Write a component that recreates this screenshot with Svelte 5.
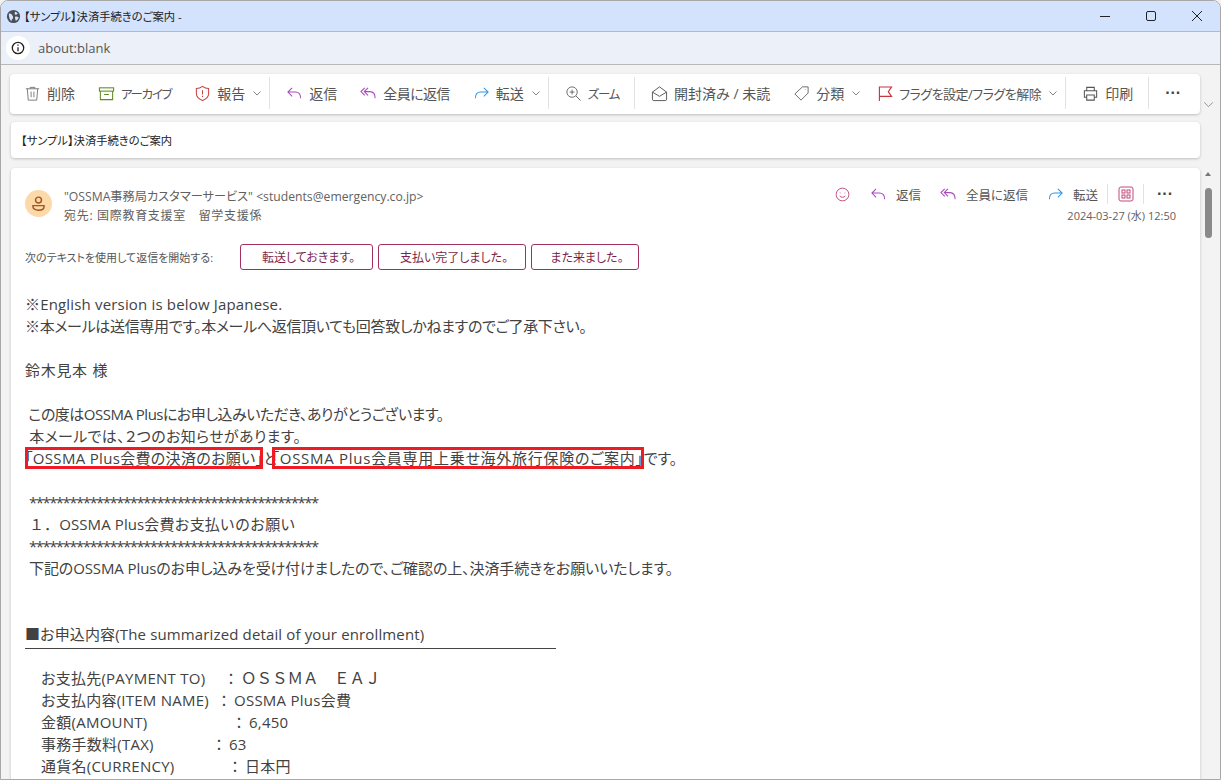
<script lang="ts">
	// ls = per-line tracking: the reference's hinted font has uneven advance widths
	const lines = [
		{ text: '※English version is below Japanese.', ls: 0.17 },
		{ text: '※本メールは送信専用です。本メールへ返信頂いても回答致しかねますのでご了承下さい。', ls: -0.32 },
		{ text: '', ls: 0 },
		{ text: '鈴木見本 様', ls: 0.7 },
		{ text: '', ls: 0 },
		{ text: ' この度はOSSMA Plusにお申し込みいただき、ありがとうございます。', ls: -0.5 },
		{ text: ' 本メールでは、２つのお知らせがあります。', ls: 0.35 }
	];
	const details = [
		{ label: 'お支払先(PAYMENT TO)', valueX: 241, value: 'ＯＳＳＭＡ　ＥＡＪ', full: true },
		{ label: 'お支払内容(ITEM NAME)', valueX: 234, value: 'OSSMA Plus会費' },
		{ label: '金額(AMOUNT)', valueX: 249, value: '6,450' },
		{ label: '事務手数料(TAX)', valueX: 229, value: '63' },
		{ label: '通貨名(CURRENCY)', valueX: 245, value: '日本円' }
	];
</script>

{#snippet reply(color)}
	<svg class="ico" viewBox="0 0 18 18" fill="none" stroke={color} stroke-width="1.1"><path d="M6.5 3 2 7.5 6.5 12M2 7.5h8c3.5 0 5.5 2.2 5.5 6.5"/></svg>
{/snippet}
{#snippet replyAll(color)}
	<svg class="ico" viewBox="0 0 18 18" fill="none" stroke={color} stroke-width="1.1"><path d="M5 3 1 7l4 4M8.5 3l-4 4 4 4M4.500 7h6c3.500 0 5.500 2.400 5.500 7"/></svg>
{/snippet}
{#snippet forward()}
	<svg class="ico" viewBox="0 0 18 18" fill="none" stroke="#2f96e8" stroke-width="1.1"><path d="M11.500 3 16 7.500 11.500 12M16 7.500H8c-3.500 0-5.500 2.200-5.500 6.500"/></svg>
{/snippet}
{#snippet chevron()}
	<svg class="chev" viewBox="0 0 10 10" fill="none" stroke="#777" stroke-width="0.9"><path d="m1.500 3.500 3.500 3.500 3.500-3.500"/></svg>
{/snippet}

<div class="window">
	<header class="titlebar">
		<svg class="globe" viewBox="0 0 16 16"><circle cx="8" cy="8" r="7" fill="#4a4f57"/><path d="M3 5c2-.5 3 .5 3.500 1.500S8 8 7.500 9.500 6 11 5.500 13C4 11 3 9 3 5Zm7-2c1 .5 2 1 2.500 2-1 1-1.500.5-2.500 1S9 4 10 3Zm0 5c1.500 0 3 .5 3.500 1-.5 1.500-1.500 3-3 3.500-.5-1.500-1.500-3-.5-4.500Z" fill="#d3e3fd"/></svg>
		<span class="title">【サンプル】決済手続きのご案内 -</span>
		<div class="winbtns">
			<svg viewBox="0 0 12 12" stroke="#222" fill="none"><path d="M1 6.500h10"/></svg>
			<svg viewBox="0 0 12 12" stroke="#222" fill="none"><rect x="1.500" y="1.500" width="9" height="9" rx="1.500"/></svg>
			<svg viewBox="0 0 12 12" stroke="#222" fill="none"><path d="m1 1 10 10M11 1 1 11"/></svg>
		</div>
	</header>
	<div class="addressbar">
		<span class="infobtn">
			<svg viewBox="0 0 14 14" fill="none" stroke="#222" stroke-width="1.300"><circle cx="7" cy="7" r="5.700"/><path d="M7 6.200v4M7 3.500v1.300"/></svg>
		</span>
		<span class="url">about:blank</span>
	</div>

	<div class="content">
		<div class="main">
			<nav class="card toolbar">
				<button class="tool first"><svg class="ico" viewBox="0 0 18 18" fill="none" stroke="#777" stroke-width="1"><path d="M2 4h14M6.500 4V2.500h5V4M3.500 4l1 12h9l1-12M7.500 7v6M10.500 7v6"/></svg>削除</button>
				<button class="tool"><svg class="ico" viewBox="0 0 18 18" fill="none" stroke="#5c8a1e" stroke-width="1.100"><rect x="1.500" y="3" width="15" height="3.500"/><path d="M2.500 6.500V15.500h13V6.500M6.500 10h5"/></svg><span class="kana">アーカイブ</span></button>
				<button class="tool tight"><svg class="ico" viewBox="0 0 18 18" fill="none" stroke="#c8423f" stroke-width="1.100"><path d="M9 1.500c2 1.500 4 2.200 6.500 2.200V9c0 3.500-3 6-6.500 7.500C5.500 15 2.500 12.500 2.500 9V3.700C5 3.700 7 3 9 1.500ZM9 5.500v4.500M9 11.500v1.300"/></svg>報告{@render chevron()}</button>
				<i class="sep"></i>
				<button class="tool">{@render reply('#a94bbf')}返信</button>
				<button class="tool">{@render replyAll('#a94bbf')}<span class="slim">全員に返信</span></button>
				<button class="tool tight">{@render forward()}転送{@render chevron()}</button>
				<i class="sep"></i>
				<button class="tool"><svg class="ico" viewBox="0 0 18 18" fill="none" stroke="#666" stroke-width="1"><circle cx="7.500" cy="7.500" r="5.500"/><path d="m11.500 11.500 5 5M5 7.500h5M7.500 5v5"/></svg><span class="kana">ズーム</span></button>
				<i class="sep"></i>
				<button class="tool"><svg class="ico" viewBox="0 0 18 18" fill="none" stroke="#555" stroke-width="1"><path d="M1.500 7.500 9 2l7.500 5.500V15a1.500 1.500 0 0 1-1.500 1.500H3A1.500 1.500 0 0 1 1.500 15ZM1.500 7.500 9 12l7.500-4.500"/></svg>開封済み / 未読</button>
				<button class="tool tight"><svg class="ico" viewBox="0 0 18 18" fill="none" stroke="#666" stroke-width="1"><path d="M10 2h6v6.500l-7.500 7.500L2 9.500ZM13 4.500v.5"/></svg>分類{@render chevron()}</button>
				<button class="tool tight"><svg class="ico flag" viewBox="0 0 16 18" fill="none" stroke="#c8353f" stroke-width="1.200"><path d="M1.500 17V2h13l-3.500 5 3.500 5h-13"/></svg><span class="flagtext">フラグを設定/フラグを解除</span>{@render chevron()}</button>
				<i class="sep"></i>
				<button class="tool"><svg class="ico" viewBox="0 0 18 18" fill="none" stroke="#555" stroke-width="1.100"><path d="M5 6V2.500h8V6M5 13H2.500V6h13v7H13M5 10.500h8v5.500H5Z"/></svg>印刷</button>
				<i class="sep"></i>
				<span class="more">···</span>
			</nav>

			<div class="card subject">【サンプル】決済手続きのご案内</div>

			<article class="card message">
				<div class="msghead">
					<div class="avatar">
						<svg viewBox="0 0 16 16" fill="none" stroke="#a5561c" stroke-width="1.400"><circle cx="8" cy="4.800" r="2.800"/><path d="M2.800 10h10.400v1c0 2-2 3.300-5.200 3.300S2.800 13 2.800 11Z"/></svg>
					</div>
					<div class="who">
						<div>"OSSMA事務局カスタマーサービス" &lt;students@emergency.co.jp&gt;</div>
						<div class="rcpt">宛先: 国際教育支援室　留学支援係</div>
					</div>
					<div class="meta">
						<div class="actions">
							<svg class="smile" viewBox="0 0 16 16" fill="none" stroke="#c0497f"><circle cx="8" cy="8" r="6.800"/><path d="M5 9.500c1.500 2 4.500 2 6 0M5.500 6v.8M10.500 6v.8"/></svg>
							<span class="act">{@render reply('#a94bbf')}返信</span>
							<span class="act">{@render replyAll('#a94bbf')}全員に返信</span>
							<span class="act">{@render forward()}転送</span>
							<i class="sep small"></i>
							<svg class="apps" viewBox="0 0 16 16" fill="none" stroke="#c0497f"><rect x="1" y="1" width="14" height="14" rx="2"/><rect x="4" y="4" width="3" height="3"/><rect x="9" y="4" width="3" height="3"/><rect x="4" y="9" width="3" height="3"/><rect x="9" y="9" width="3" height="3"/></svg>
							<i class="sep small"></i>
							<span class="more small">···</span>
						</div>
						<div class="date">2024-03-27 (水) 12:50</div>
					</div>
				</div>

				<div class="quick">
					<span class="quicklabel">次のテキストを使用して返信を開始する:</span>
					<button class="qbtn a">転送しておきます。</button>
					<button class="qbtn b">支払い完了しました。</button>
					<button class="qbtn c">また来ました。</button>
				</div>

				<div class="body">
					{#each lines as line}
						<div class="line" style="letter-spacing:{line.ls}px">{line.text}</div>
					{/each}
					<div class="line marked"><span class="mark one">「OSSMA Plus会費の決済のお願い」</span><span class="to">と</span><span class="mark two">「OSSMA Plus会員専用上乗せ海外旅行保険のご案内」</span>です。</div>
					<div class="line"></div>
					<div class="line indent stars">*******************************************</div>
					<div class="line indent numbered">１．OSSMA Plus会費お支払いのお願い</div>
					<div class="line indent stars">*******************************************</div>
					<div class="line indent notice">下記のOSSMA Plusのお申し込みを受け付けましたので、ご確認の上、決済手続きをお願いいたします。</div>
					<div class="line"></div>
					<div class="line"></div>
					<div class="line heading">■お申込内容(The summarized detail of your enrollment)</div>
					<div class="line"></div>
					{#each details as row}
						<div class="line row">
							<span class="label" style="width:{row.valueX - 61}px">{row.label}</span><span class="colon">：</span><span class:full={row.full}>{row.value}</span>
						</div>
					{/each}
				</div>
			</article>
		</div>

		<aside class="side">
			<svg class="collapse" viewBox="0 0 10 10" fill="none" stroke="#888" stroke-width="0.800"><path d="m1 3 4 4 4-4"/></svg>
			<div class="scrolltrack">
				<span class="arrow"></span>
				<span class="thumb"></span>
			</div>
		</aside>
	</div>
</div>

<style>
	:global(body) {
		margin: 0;
		overflow: hidden;
		background: #f3f3f3;
	}
	.window {
		height: 780px;
		width: 1221px;
		box-sizing: border-box;
		display: flex;
		flex-direction: column;
		overflow: hidden;
		background: #f3f3f3;
		border: 1px solid #a8a8a8;
		border-radius: 8px 8px 0 0;
		font-family: "Open Sans", "Noto Sans CJK JP", sans-serif;
		font-feature-settings: "palt";
		color: #424242;
	}
	.titlebar {
		height: 30px;
		flex: none;
		display: flex;
		align-items: center;
		background: #d3e3fd;
		border-bottom: 1px solid #b3b8c2;
		padding-left: 5px;
	}
	.globe { width: 15px; height: 15px; margin-right: 3px; }
	.title { font-size: 11.300px; color: #222; }
	.winbtns {
		margin-left: auto;
		display: flex;
		gap: 34px;
		padding-right: 17px;
	}
	.winbtns svg { width: 12px; height: 12px; }
	.addressbar {
		height: 32px;
		flex: none;
		display: flex;
		align-items: center;
		background: #ecf0f8;
		border-bottom: 1px solid #b8b8b8;
		padding-left: 5px;
		font-size: 13px;
	}
	.infobtn {
		width: 24px;
		height: 24px;
		border-radius: 50%;
		background: #fff;
		display: flex;
		align-items: center;
		justify-content: center;
		margin-right: 8px;
	}
	.infobtn svg { width: 14px; height: 14px; }
	.url { color: #555; }
	.content {
		flex: 1;
		min-height: 0;
		display: flex;
	}
	.main {
		width: 1199px;
		flex: none;
		padding: 9px 0 0 9px;
		box-sizing: border-box;
		display: flex;
		flex-direction: column;
		gap: 8px;
	}
	.card {
		background: #fff;
		border-radius: 4px;
		box-shadow: 0 1px 3px rgba(0, 0, 0, 0.22);
	}
	.toolbar {
		height: 40px;
		flex: none;
		box-sizing: border-box;
		display: flex;
		align-items: center;
		padding: 0 0 2px 14px;
		font-size: 14px;
	}
	.tool {
		display: flex;
		align-items: center;
		gap: 6px;
		border: 0;
		background: none;
		padding: 0;
		margin-right: 23px;
		font: inherit;
		font-feature-settings: "palt";
		color: #555;
		white-space: nowrap;
	}
	.tool.tight { margin-right: 17px; }
	.kana { font-size: 12.500px; letter-spacing: -1.300px; }
	.slim { letter-spacing: -0.600px; }
	.flagtext { font-size: 13px; letter-spacing: -0.500px; }
	.ico { width: 17px; height: 17px; flex: none; }
	.flag { width: 15px; }
	.chev { width: 10px; height: 10px; margin-left: 1px; }
	.sep {
		width: 1px;
		height: 32px;
		background: #e2e2e2;
		margin-right: 16px;
		flex: none;
	}
	.tool + .sep { margin-left: -8px; }
	.tool.tight + .sep { margin-left: -10px; }
	.more {
		font-family: "Liberation Sans", sans-serif;
		font-size: 16px;
		font-weight: 700;
		line-height: 1;
		color: #444;
		letter-spacing: 0;
	}
	.subject {
		height: 36px;
		flex: none;
		box-sizing: border-box;
		display: flex;
		align-items: center;
		padding-left: 10px;
		margin-left: 1px;
		font-size: 11.300px;
		color: #222;
	}
	.message {
		flex: 1;
		min-height: 0;
		margin: 2px 0 0 1px;
		padding: 0 0 0 14px;
		overflow: hidden;
		border-radius: 4px 4px 0 0;
	}
	.msghead {
		display: flex;
		height: 66px;
		box-sizing: border-box;
		padding-top: 17px;
	}
	.avatar {
		width: 27px;
		height: 27px;
		margin-top: 5px;
		flex: none;
		border-radius: 50%;
		background: #fcd9a8;
		display: flex;
		align-items: center;
		justify-content: center;
	}
	.avatar svg { width: 17px; height: 17px; }
	.who {
		margin-left: 12px;
		padding-top: 2px;
		font-size: 12.200px;
		line-height: 19px;
		color: #616161;
	}
	.rcpt { letter-spacing: 0.700px; font-size: 12px; }
	.meta {
		margin-left: auto;
		padding-right: 24px;
		display: flex;
		flex-direction: column;
		align-items: flex-end;
	}
	.actions {
		height: 18px;
		display: flex;
		align-items: center;
		gap: 0;
		font-size: 12.500px;
		color: #555;
	}
	.smile { width: 15px; height: 15px; margin-right: 20px; }
	.act {
		display: flex;
		align-items: center;
		gap: 9px;
		margin-right: 19px;
	}
	.actions .ico { width: 17px; height: 17px; }
	.act:nth-of-type(3) { margin-right: 9px; }
	.sep.small { height: 20px; margin: 0 10px 0 0; }
	.apps { width: 16px; height: 16px; margin-right: 9px; }
	.more.small { margin: 0 3px 0 3px; font-size: 16px; }
	.date {
		font-size: 11px;
		color: #616161;
		margin-top: 4px;
	}
	.quick {
		display: flex;
		align-items: center;
		height: 26px;
		margin-top: 10px;
		gap: 5px;
	}
	.quicklabel {
		font-size: 11px;
		color: #555;
		width: 210px;
		flex: none;
		white-space: nowrap;
	}
	.qbtn {
		height: 26px;
		box-sizing: border-box;
		background: #fff;
		border: 1px solid #a4305f;
		border-radius: 3px;
		color: #7d1f4a;
		font: inherit;
		font-feature-settings: "palt";
		font-size: 12px;
		padding: 0 0 0 4px;
	}
	.qbtn.a { width: 133px; }
	.qbtn.b { width: 148px; }
	.qbtn.c { width: 108px; }
	.body {
		margin-top: 23px;
		font-size: 15px;
		line-height: 22px;
		color: #424242;
	}
	.line {
		height: 22px;
		white-space: pre;
	}
	.indent { padding-left: 4px; }
	.stars { letter-spacing: -1.550px; }
	.numbered { font-feature-settings: normal; letter-spacing: 0.100px; }
	.notice { letter-spacing: -0.100px; }
	.marked {
		display: flex;
		align-items: center;
	}
	.mark {
		outline: 3px solid #ed1c24;
		outline-offset: -3px;
		height: 22px;
		box-sizing: border-box;
		line-height: 22px;
	}
	.mark.one { letter-spacing: 0.320px; }
	.mark.two { letter-spacing: 0.720px; }
	.to { letter-spacing: -5px; }
	.heading {
		width: 531px;
		height: 25px;
		border-bottom: 1px solid #444;
		letter-spacing: 0.140px;
	}
	.heading + .line { height: 18px; }
	.row {
		display: flex;
		padding-left: 16px;
		letter-spacing: 0.250px;
	}
	.label { flex: none; }
	.colon {
		width: 20px;
		flex: none;
		text-align: center;
		font-feature-settings: normal;
		letter-spacing: 0;
	}
	.full {
		font-size: 15.500px;
		font-feature-settings: normal;
		letter-spacing: 0;
	}
	.side {
		flex: 1;
		position: relative;
	}
	.collapse {
		position: absolute;
		left: 3px;
		top: 34px;
		width: 11px;
		height: 11px;
	}
	.scrolltrack {
		position: absolute;
		left: 0;
		right: 0;
		top: 104px;
		bottom: 0;
	}
	.arrow {
		position: absolute;
		left: 5px;
		top: 3px;
		border-left: 3px solid transparent;
		border-right: 3px solid transparent;
		border-bottom: 4px solid #777;
	}
	.thumb {
		position: absolute;
		left: 5px;
		top: 19px;
		width: 7px;
		height: 50px;
		background: #8a8a8a;
		border-radius: 4px;
	}
</style>
